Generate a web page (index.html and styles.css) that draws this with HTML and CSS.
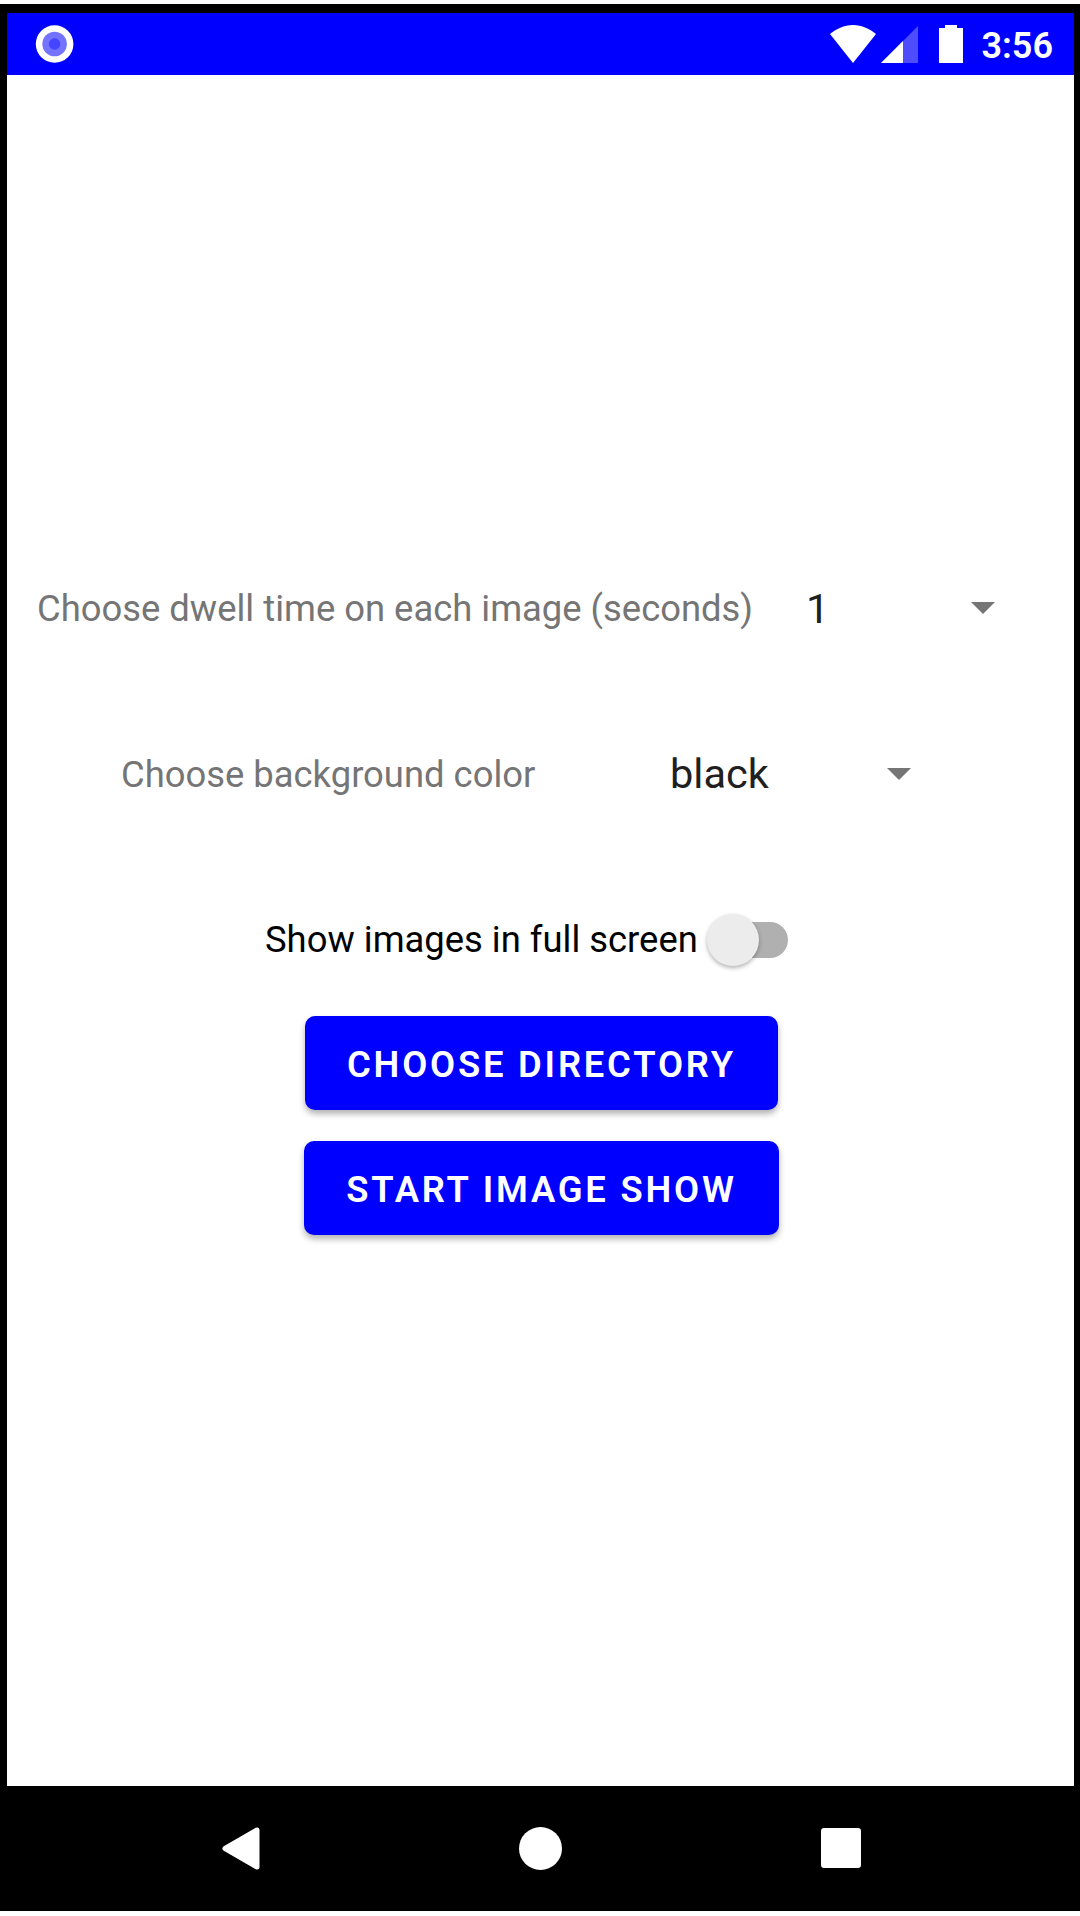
FILE: index.html
```html
<!DOCTYPE html>
<html lang="en">
<head>
<meta charset="utf-8">
<title>Image Show</title>
<link rel="stylesheet" href="styles.css">
</head>
<body>
<div class="device">
  <header class="status">
    <svg class="notice" width="39" height="38" viewBox="0 0 39 38"><circle cx="19.6" cy="19" r="18.8" fill="#fff"/><circle cx="19.6" cy="19" r="12.3" fill="#7373ff"/><circle cx="19.6" cy="19" r="5.7" fill="#4545ff"/></svg>
    <div class="system">
      <svg width="136" height="38" viewBox="0 0 136 38" fill="#fff"><path d="M0 9C6 4 14 0 23 0s17 4 23 9L23 38z"/><path d="M51 38 88 1v37z" fill-opacity=".3"/><path d="M51 38 73 16v22z"/><path d="M109 3h6V0h12v3h6v35h-24z"/></svg>
      <span class="clock">3:56</span>
    </div>
  </header>
  <main class="content">
    <div class="row dwell"><span class="label">Choose dwell time on each image (seconds)</span><div class="spinner"><span>1</span><i class="arrow"></i></div></div>
    <div class="row color"><span class="label">Choose background color</span><div class="spinner"><span>black</span><i class="arrow"></i></div></div>
    <div class="row full"><span class="switch-label">Show images in full screen</span><div class="track"><div class="thumb"></div></div></div>
    <button class="button">Choose directory</button>
    <button class="button start">Start image show</button>
  </main>
  <nav class="nav">
    <svg width="38" height="43" viewBox="0 0 38 43"><path d="M3 21.5 35 3v37z" fill="#fff" stroke="#fff" stroke-width="5" stroke-linejoin="round"/></svg>
    <svg width="43" height="43" viewBox="0 0 43 43"><circle cx="21.5" cy="21.5" r="21.5" fill="#fff"/></svg>
    <svg width="40" height="40" viewBox="0 0 40 40"><rect width="40" height="40" rx="3" fill="#fff"/></svg>
  </nav>
</div>
</body>
</html>
```
FILE: styles.css
```css
* { box-sizing: border-box; }
body { margin: 0; padding-top: 4px; background: #fff; font-family: Roboto, sans-serif; }
.device { width: 1080px; height: 1907px; padding: 9px 6px 0 7px; background: #000; }
.status { height: 62px; padding: 12px 21px 0 28px; display: flex; justify-content: space-between; align-items: flex-start; background: #00f; color: #fff; }
.system { display: flex; gap: 15px; }
.clock { font-size: 36px; line-height: 43px; font-weight: 600; }
.content { height: 1711px; padding-top: 491px; background: #fff; display: flex; flex-direction: column; align-items: flex-start; }
.row { display: flex; align-items: center; height: 84px; white-space: nowrap; }
.label, .switch-label { font-size: 36.4px; color: #757575; }
.switch-label { color: #000; }
.dwell { padding-left: 30px; }
.dwell .label { width: 769px; }
.color { padding-left: 114px; margin-top: 82px; }
.color .label { width: 549px; }
.spinner { display: flex; align-items: center; justify-content: space-between; width: 189px; font-size: 41.5px; color: #202020; }
.color .spinner { width: 241px; line-height: 48px; padding-bottom: 1px; }
.arrow { border: 12.5px solid transparent; border-top-color: #757575; border-bottom: 0; }
.full { padding-left: 258px; margin-top: 82px; }
.full .switch-label { width: 452px; padding-bottom: 1px; }
.track { width: 71px; height: 36px; border-radius: 18px; background: #b0b0b0; }
.thumb { width: 52px; height: 52px; margin: -8px 0 0 -10px; border-radius: 50%; background: #ececec; box-shadow: 0 2px 4px rgba(0,0,0,.3); }
.button { margin-left: 298px; height: 94px; width: 473px; margin-top: 34px; padding: 2px 0 0; border: 0; border-radius: 10px; background: #00f; color: #fff; font: 600 36.4px Roboto, sans-serif; letter-spacing: 2.8px; text-transform: uppercase; box-shadow: 0 4px 6px rgba(0,0,0,.3); }
.start { width: 475px; margin-left: 297px; margin-top: 31px; }
.nav { height: 124px; display: flex; align-items: center; padding-left: 215px; gap: 259px; }
```
